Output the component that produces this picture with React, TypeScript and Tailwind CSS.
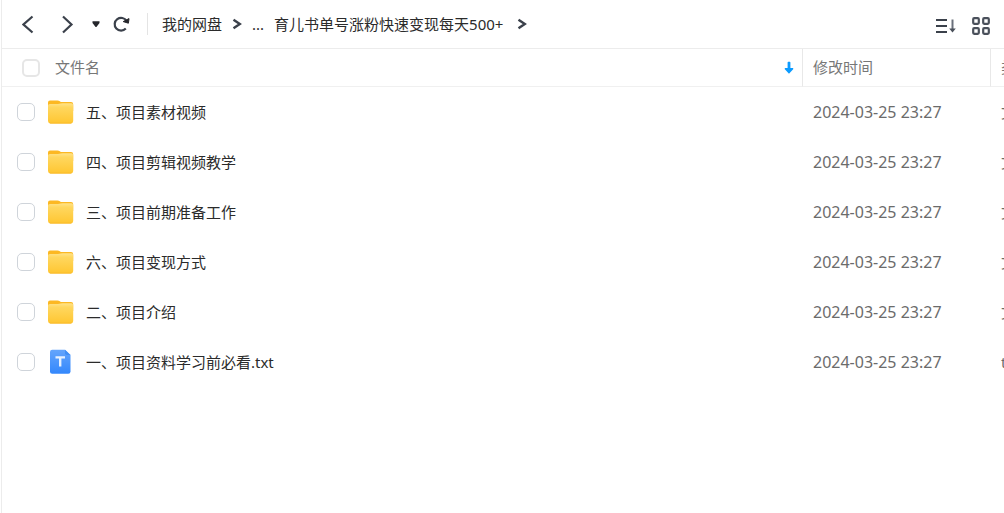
import { useState } from "react";

type FileItem = {
  name: string;
  time: string;
  type: string;
  kind: "folder" | "txt";
};

const files: FileItem[] = [
  { name: "五、项目素材视频", time: "2024-03-25 23:27", type: "文件夹", kind: "folder" },
  { name: "四、项目剪辑视频教学", time: "2024-03-25 23:27", type: "文件夹", kind: "folder" },
  { name: "三、项目前期准备工作", time: "2024-03-25 23:27", type: "文件夹", kind: "folder" },
  { name: "六、项目变现方式", time: "2024-03-25 23:27", type: "文件夹", kind: "folder" },
  { name: "二、项目介绍", time: "2024-03-25 23:27", type: "文件夹", kind: "folder" },
  { name: "一、项目资料学习前必看.txt", time: "2024-03-25 23:27", type: "txt文件", kind: "txt" },
];

function FolderIcon() {
  return (
    <svg width="26" height="26" viewBox="0 0 26 26" className="shrink-0">
      <defs>
        <linearGradient id="folder" x1="0" y1="0" x2="0" y2="1">
          <stop offset="0" stopColor="#ffe38a" />
          <stop offset="0.2" stopColor="#ffd75f" />
          <stop offset="1" stopColor="#ffc631" />
        </linearGradient>
      </defs>
      <path d="M0 3.5Q0 1.5 2 1.5H9.5Q10.8 1.5 11.8 2.2L12.8 3H23Q25.2 3 25.2 5V12H0Z" fill="#fcb823" />
      <path d="M0 6.8Q0 5 2 5H10Q11.6 5 12.6 4.6Q13.5 4.2 14.5 4.2H23.2Q25.2 4.2 25.2 6.2V22Q25.2 24.4 22.8 24.4H2.4Q0 24.4 0 22Z" fill="url(#folder)" />
      <path d="M1 23.7Q1.6 24.4 2.6 24.4H22.6Q23.8 24.4 24.4 23.7Z" fill="#f7b422" />
    </svg>
  );
}

function TxtIcon() {
  return (
    <svg width="26" height="26" viewBox="0 0 26 26" className="shrink-0">
      <defs>
        <linearGradient id="txt" x1="0" y1="0" x2="0" y2="1">
          <stop offset="0" stopColor="#64a5fc" />
          <stop offset="1" stopColor="#3387fc" />
        </linearGradient>
      </defs>
      <path d="M2 3Q2 0.8 4.2 0.8H17L22.5 6V22.6Q22.5 24.8 20.3 24.8H4.2Q2 24.8 2 22.6Z" fill="url(#txt)" />
      <path d="M17 0.8L22.5 6H19Q17 6 17 4.2Z" fill="#4290f5" />
      <path d="M7.5 8.4H17M12.2 8.4V17.6" fill="none" stroke="#e6f1ff" strokeWidth="2.4" />
    </svg>
  );
}

function Crumb() {
  return (
    <svg width="10" height="12" viewBox="0 0 10 12" className="shrink-0">
      <path d="M1.5 1.8L7.8 6L1.5 10.2" fill="none" stroke="#3b414b" strokeWidth="2.4" />
    </svg>
  );
}

type CheckboxProps = {
  label: string;
  checked: boolean;
  className: string;
  onChange: () => void;
};

function Checkbox({ label, checked, className, onChange }: CheckboxProps) {
  return (
    <input
      type="checkbox"
      aria-label={label}
      checked={checked}
      onChange={onChange}
      className={`size-[18px] shrink-0 appearance-none rounded-[5px] bg-white checked:border-[#06a7ff] checked:bg-[#06a7ff] ${className}`}
    />
  );
}

export default function App() {
  const [selected, setSelected] = useState<string[]>([]);
  const allSelected = selected.length === files.length;

  const toggle = (name: string) => {
    setSelected(selected.includes(name) ? selected.filter((n) => n !== name) : [...selected, name]);
  };

  return (
    <div className="ml-px min-h-screen overflow-hidden border-l border-[#ececec] bg-white font-['Noto_Sans','Noto_Sans_CJK_SC',sans-serif] text-[15px] text-[#2b2b2b]">
      <header className="flex h-[49px] items-center justify-between border-b border-[#ececec] pr-3.5 pl-5">
        <div className="flex items-center">
          <button aria-label="后退">
            <svg width="12" height="20" viewBox="0 0 12 20">
              <path d="M10.5 2.5L1.5 10.5L10.5 18.5" fill="none" stroke="#3b414b" strokeWidth="2.2" />
            </svg>
          </button>
          <button aria-label="前进" className="ml-7">
            <svg width="12" height="20" viewBox="0 0 12 20">
              <path d="M1 2.5L9.5 10.5L1 18.5" fill="none" stroke="#3b414b" strokeWidth="2.2" />
            </svg>
          </button>
          <button aria-label="历史" className="ml-[18px]">
            <svg width="8" height="8" viewBox="0 0 8 8">
              <path d="M0.5 1.2H7.5V3L4.8 6.5Q4 7.6 3.2 6.5L0.5 3Z" fill="#25262b" />
            </svg>
          </button>
          <button aria-label="刷新" className="ml-3">
            <svg width="18" height="18" viewBox="0 0 18 18">
              <path d="M13.8 13.6A6.4 6.4 0 1 1 14.6 6" fill="none" stroke="#3b414b" strokeWidth="2.2" />
              <path d="M17 3.6L16.4 8.2L11.2 6.6Z" fill="#25262b" stroke="#25262b" strokeLinejoin="round" />
            </svg>
          </button>
          <nav aria-label="路径" className="ml-[17px] flex items-center">
            <div className="mr-3.5 h-[22px] w-px bg-[#e4e4e4]" />
            <a href="#">我的网盘</a>
            <span className="mx-2.5 flex"><Crumb /></span>
            <a href="#" className="mr-2.5">...</a>
            <a href="#">育儿书单号涨粉快速变现每天500+</a>
            <span className="ml-3.5 flex"><Crumb /></span>
          </nav>
        </div>
        <div className="flex items-center gap-4 pt-1">
          <button aria-label="排序">
            <svg width="20" height="18" viewBox="0 0 20 18">
              <path d="M0 3H11M0 9H11M0 15H11" fill="none" stroke="#3b414b" strokeWidth="2" />
              <path d="M16.5 2.5V13" fill="none" stroke="#6a707b" strokeWidth="2" />
              <path d="M13.2 11.5H19.8L16.5 15.5Z" fill="#4a505b" />
            </svg>
          </button>
          <button aria-label="网格视图">
            <svg width="18" height="18" viewBox="0 0 18 18" fill="none" stroke="#4a505b" strokeWidth="2.2">
              <rect x="1.2" y="1.2" width="5.6" height="5.6" rx="1" />
              <rect x="11.2" y="1.2" width="5.6" height="5.6" rx="1" />
              <rect x="1.2" y="11.2" width="5.6" height="5.6" rx="1" />
              <rect x="11.2" y="11.2" width="5.6" height="5.6" rx="1" />
            </svg>
          </button>
        </div>
      </header>

      <table className="w-full table-fixed border-separate border-spacing-0 text-left">
        <thead className="text-[#777]">
          <tr className="h-[38px]">
            <th className="border-b border-[#f0f0f0] p-0 font-normal">
              <div className="flex items-center pr-2 pl-5">
                <Checkbox
                  label="全选"
                  checked={allSelected}
                  onChange={() => setSelected(allSelected ? [] : files.map((f) => f.name))}
                  className="border-2 border-[#e6e6e6]"
                />
                <span className="ml-[15px]">文件名</span>
                <svg width="10" height="14" viewBox="0 0 10 14" className="ml-auto">
                  <path d="M3.6 1.5Q3.6 0.8 4.3 0.8H5.7Q6.4 0.8 6.4 1.5V7H9L9.4 8L5 12.8L0.6 8L1 7H3.6Z" fill="#0c9bff" />
                </svg>
              </div>
            </th>
            <th className="w-[188px] border-b border-l border-[#e8e8e8] border-b-[#f0f0f0] p-0 pl-2.5 font-normal">修改时间</th>
            <th className="w-3.5 overflow-hidden border-b border-l border-[#e8e8e8] border-b-[#f0f0f0] p-0 pl-2.5 font-normal whitespace-nowrap">
              类型
            </th>
          </tr>
        </thead>
        <tbody>
          {files.map((file) => (
            <tr key={file.name} className="h-[50px] hover:bg-[#f5f9ff]">
              <td className="p-0">
                <div className="flex items-center pl-[15px]">
                  <Checkbox
                    label={file.name}
                    checked={selected.includes(file.name)}
                    onChange={() => toggle(file.name)}
                    className="border border-[#cfd4da]"
                  />
                  <a href="#" className="ml-[13px] flex items-center gap-3">
                    {file.kind === "folder" ? <FolderIcon /> : <TxtIcon />}
                    {file.name}
                  </a>
                </div>
              </td>
              <td className="p-0 pl-[11px] text-base text-[#6b6b6b]">{file.time}</td>
              <td className="overflow-hidden p-0 pl-[11px] whitespace-nowrap text-[#6b6b6b]">{file.type}</td>
            </tr>
          ))}
        </tbody>
      </table>
    </div>
  );
}
